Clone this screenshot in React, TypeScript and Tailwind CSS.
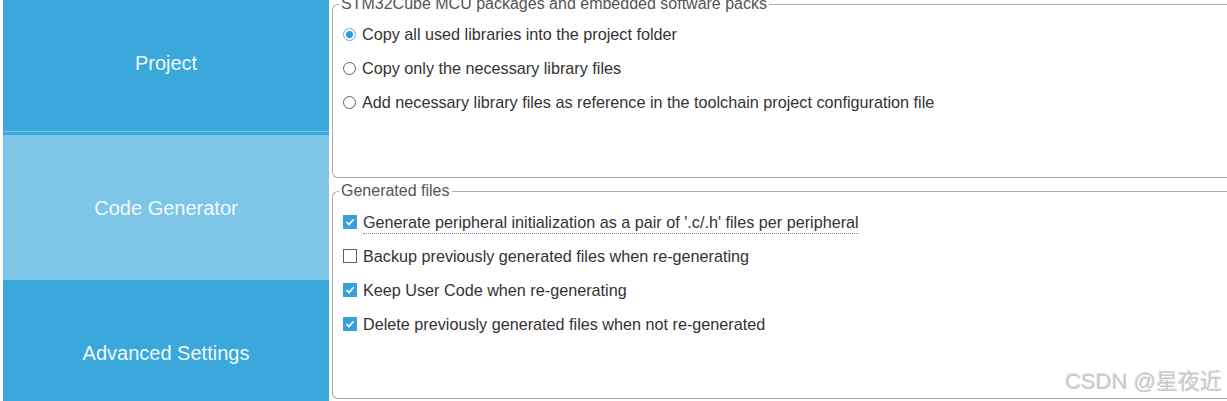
import React from "react"

const font = { fontFamily: '"Liberation Sans", Arial, sans-serif' }

type Item = { label: string; checked: boolean; focus?: boolean }

const radios: Item[] = [
  { label: "Copy all used libraries into the project folder", checked: true },
  { label: "Copy only the necessary library files", checked: false },
  { label: "Add necessary library files as reference in the toolchain project configuration file", checked: false },
]

const checks: Item[] = [
  { label: "Generate peripheral initialization as a pair of '.c/.h' files per peripheral", checked: true, focus: true },
  { label: "Backup previously generated files when re-generating", checked: false },
  { label: "Keep User Code when re-generating", checked: true },
  { label: "Delete previously generated files when not re-generated", checked: true },
]

const Radio = ({ checked }: { checked: boolean }) =>
  checked ? (
    <span className="w-[13px] h-[13px] rounded-full border border-[#5bb3e2] bg-white flex items-center justify-center shrink-0">
      <span className="w-[7px] h-[7px] rounded-full bg-[#2f9bd6]" />
    </span>
  ) : (
    <span className="w-[13px] h-[13px] rounded-full border border-[#5f5f5f] bg-white shrink-0" />
  )

const Check = ({ checked }: { checked: boolean }) =>
  checked ? (
    <span className="w-[14px] h-[14px] bg-[#3aa0da] flex items-center justify-center shrink-0">
      <svg width="10" height="10" viewBox="0 0 10 10" fill="none">
        <path d="M1.5 5.2 L4 7.6 L8.6 2.2" stroke="white" strokeWidth="1.6" />
      </svg>
    </span>
  ) : (
    <span className="w-[14px] h-[14px] border border-[#5f5f5f] bg-white shrink-0" />
  )

const Row = ({ item, kind }: { item: Item; kind: "radio" | "check" }) => (
  <div className="h-[34px] flex items-center gap-[6px]">
    {kind === "radio" ? <Radio checked={item.checked} /> : <Check checked={item.checked} />}
    <span
      className={
        "text-[16.2px] leading-[19px] text-[#333333] whitespace-nowrap " +
        (item.focus ? "border-b border-dotted border-[#8a8a8a] pb-[1px] mt-[3px]" : "")
      }
    >
      {item.label}
    </span>
  </div>
)

export default function App() {
  return (
    <div className="w-[1227px] h-[401px] bg-white flex overflow-hidden relative" style={font}>
      {/* left nav */}
      <div className="w-[326px] ml-[3px] flex flex-col shrink-0">
        <div className="h-[135px] bg-[#3aa8db] flex flex-col shrink-0">
          <div className="h-[131px] flex items-center justify-center">
            <span className="text-[20px] text-[#eef8fd] -mt-[5px]">Project</span>
          </div>
          <div className="h-[1px] bg-[#74c3ea]" />
        </div>
        <div className="h-[145px] bg-[#7dc6e8] flex items-center justify-center shrink-0">
          <span className="text-[20px] text-[#f2f9fd]">Code Generator</span>
        </div>
        <div className="h-[145px] bg-[#3aa8db] flex items-center justify-center shrink-0">
          <span className="text-[20px] text-[#eef8fd]">Advanced Settings</span>
        </div>
      </div>

      {/* right panel */}
      <div className="flex-1 ml-[3px] flex flex-col -mt-[5px]">
        <fieldset className="border border-r-0 border-[#a9acaf] rounded-l-[6px] m-0 p-0">
          <legend className="ml-[6px] px-[2px] text-[16px] leading-[18px] text-[#555555] whitespace-nowrap">
            STM32Cube MCU packages and embedded software packs
          </legend>
          <div className="h-[164px] pl-[10px] pt-[4px]">
            {radios.map((r) => (
              <Row key={r.label} item={r} kind="radio" />
            ))}
          </div>
        </fieldset>

        <fieldset className="border border-r-0 border-[#a9acaf] rounded-l-[6px] m-0 p-0 mt-[4px]">
          <legend className="ml-[6px] px-[2px] text-[16px] leading-[18px] text-[#555555]">
            Generated files
          </legend>
          <div className="h-[198px] pl-[10px] pt-[5px]">
            {checks.map((c) => (
              <Row key={c.label} item={c} kind="check" />
            ))}
          </div>
        </fieldset>
      </div>

      <div
        className="absolute right-[5px] bottom-[6px] text-[22px] leading-[26px] text-[#c9c9c9] whitespace-nowrap"
        style={{
          fontFamily: '"Liberation Sans", "Noto Sans CJK SC", sans-serif',
          textShadow: "1px 1px 0 #ffffff, -1px -1px 0 #e4e4e4",
        }}
      >
        CSDN @星夜近
      </div>
    </div>
  )
}
